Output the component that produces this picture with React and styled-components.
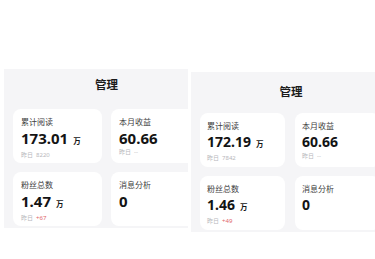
import styled, { createGlobalStyle } from 'styled-components';

const GlobalStyle = createGlobalStyle`
  html, body {
    margin: 0;
    padding: 0;
    background: #ffffff;
    overflow: hidden;
  }
  body {
    font-family: "Noto Sans", "Noto Sans CJK SC", sans-serif;
    color: #1c1c1e;
  }
`;

const Page = styled.div`
  width: 375px;
  height: 259px;
  display: flex;
  flex-direction: row;
  align-items: flex-start;
  overflow: hidden;
`;

const Shot = styled.div`
  flex: none;
  width: ${(p) => p.$w}px;
  height: ${(p) => p.$h}px;
  margin-top: ${(p) => p.$top}px;
  margin-left: ${(p) => p.$left}px;
  overflow: hidden;
`;

const Panel = styled.div`
  width: ${(p) => p.$pw}px;
  height: 100%;
  background: #f5f5f7;
  padding: ${(p) => p.$pt}px 9px 0;
  box-sizing: border-box;
`;

const Title = styled.div`
  text-align: center;
  font-size: 11.5px;
  font-weight: 700;
  line-height: 14px;
  height: ${(p) => p.$h}px;
  color: #1a1a1a;
`;

const Grid = styled.div`
  display: grid;
  grid-template-columns: ${(p) => p.$cw}px ${(p) => p.$cw}px;
  column-gap: ${(p) => p.$gap}px;
  row-gap: 9px;
`;

const Card = styled.div`
  background: #ffffff;
  border-radius: 8px;
  height: 54px;
  padding: 8px ${(p) => p.$px}px 0;
  box-sizing: border-box;
  display: flex;
  flex-direction: column;
`;

const Label = styled.div`
  font-size: 8px;
  line-height: 10px;
  color: #404040;
`;

const Value = styled.div`
  margin-top: 3px;
  font-size: ${(p) => p.$fs}px;
  font-weight: 700;
  line-height: 16px;
  color: #141414;
  display: flex;
  align-items: baseline;
`;

const Unit = styled.span`
  font-size: 7.5px;
  font-weight: 700;
  margin-left: 5px;
`;

const Sub = styled.div`
  margin-top: 2px;
  font-size: 6px;
  line-height: 8px;
  color: #b8b8bc;
`;

const Delta = styled.span`
  color: ${(p) => (p.$up ? '#e0656a' : '#b8b8bc')};
  margin-left: 3px;
`;

const shots = [
  {
    left: 4, top: 69, w: 184, h: 159, pw: 205, pt: 9, th: 31, cw: 89, gap: 9, px: 8, fs: 15,
    reads: '173.01', readsY: '8220', fans: '1.47', fansY: '+67',
  },
  {
    left: 3, top: 72, w: 184, h: 160, pw: 200, pt: 13, th: 28, cw: 85, gap: 10, px: 7, fs: 14,
    reads: '172.19', readsY: '7842', fans: '1.46', fansY: '+49',
  },
];

const Manage = ({ s }) => (
  <Shot $w={s.w} $h={s.h} $top={s.top} $left={s.left}>
    <Panel $pw={s.pw} $pt={s.pt}>
      <Title $h={s.th}>管理</Title>
      <Grid $cw={s.cw} $gap={s.gap}>
        <Card $px={s.px}>
          <Label>累计阅读</Label>
          <Value $fs={s.fs}>
            {s.reads}
            <Unit>万</Unit>
          </Value>
          <Sub>
            昨日<Delta>{s.readsY}</Delta>
          </Sub>
        </Card>
        <Card $px={s.px}>
          <Label>本月收益</Label>
          <Value $fs={s.fs}>60.66</Value>
          <Sub>
            昨日<Delta>--</Delta>
          </Sub>
        </Card>
        <Card $px={s.px}>
          <Label>粉丝总数</Label>
          <Value $fs={s.fs}>
            {s.fans}
            <Unit>万</Unit>
          </Value>
          <Sub>
            昨日<Delta $up>{s.fansY}</Delta>
          </Sub>
        </Card>
        <Card $px={s.px}>
          <Label>消息分析</Label>
          <Value $fs={s.fs}>0</Value>
        </Card>
      </Grid>
    </Panel>
  </Shot>
);

export default function App() {
  return (
    <>
      <GlobalStyle />
      <Page>
        {shots.map((s, i) => (
          <Manage key={i} s={s} />
        ))}
      </Page>
    </>
  );
}
